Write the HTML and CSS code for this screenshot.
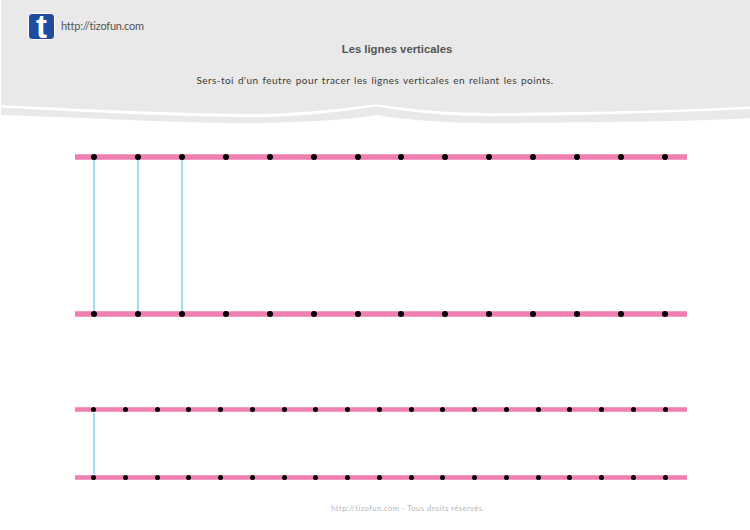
FILE: index.html
```html
<!DOCTYPE html>
<html lang="fr">
<head>
<meta charset="utf-8">
<title>Les lignes verticales</title>
<link rel="stylesheet" href="styles.css">
</head>
<body>
<header class="head">
  <svg class="head-bg" width="750" height="125" viewBox="0 0 750 125" aria-hidden="true">
    <path class="band" d="M1 106V115C100 118 190 124 262 123C310 122 345 120 376 115C410 120 450 124 510 123C600 122 690 122 750 118V106Z"/>
    <path class="gap" d="M0 105V107.500C100 113 190 117 262 117C310 116 345 111 376 106.500C410 112 450 117 510 116C600 115 690 112 750 109V105Z"/>
    <path class="main" d="M1 0V105C100 110 190 114 262 114C310 113 345 108 376 104.500C410 109 450 114 510 113C600 112 690 110 750 106.500V0Z"/>
  </svg>
  <div class="brand">
    <span class="logo"><span class="logo-t">t</span></span>
    <span class="url">http://tizofun.com</span>
  </div>
  <h1 class="title">Les lignes verticales</h1>
  <p class="lead">Sers-toi d'un feutre pour tracer les lignes verticales en reliant les points.</p>
</header>
<main class="sheet">
  <section class="exercise wide">
    <div class="rail"><div class="dot"></div><div class="dot"></div><div class="dot"></div><div class="dot"></div><div class="dot"></div><div class="dot"></div><div class="dot"></div><div class="dot"></div><div class="dot"></div><div class="dot"></div><div class="dot"></div><div class="dot"></div><div class="dot"></div><div class="dot"></div></div>
    <div class="traces"><div class="trace on"></div><div class="trace on"></div><div class="trace on"></div><div class="trace"></div><div class="trace"></div><div class="trace"></div><div class="trace"></div><div class="trace"></div><div class="trace"></div><div class="trace"></div><div class="trace"></div><div class="trace"></div><div class="trace"></div><div class="trace"></div></div>
    <div class="rail"><div class="dot"></div><div class="dot"></div><div class="dot"></div><div class="dot"></div><div class="dot"></div><div class="dot"></div><div class="dot"></div><div class="dot"></div><div class="dot"></div><div class="dot"></div><div class="dot"></div><div class="dot"></div><div class="dot"></div><div class="dot"></div></div>
  </section>
  <section class="exercise narrow">
    <div class="rail"><div class="dot"></div><div class="dot"></div><div class="dot"></div><div class="dot"></div><div class="dot"></div><div class="dot"></div><div class="dot"></div><div class="dot"></div><div class="dot"></div><div class="dot"></div><div class="dot"></div><div class="dot"></div><div class="dot"></div><div class="dot"></div><div class="dot"></div><div class="dot"></div><div class="dot"></div><div class="dot"></div><div class="dot"></div></div>
    <div class="traces"><div class="trace on"></div><div class="trace"></div></div>
    <div class="rail"><div class="dot"></div><div class="dot"></div><div class="dot"></div><div class="dot"></div><div class="dot"></div><div class="dot"></div><div class="dot"></div><div class="dot"></div><div class="dot"></div><div class="dot"></div><div class="dot"></div><div class="dot"></div><div class="dot"></div><div class="dot"></div><div class="dot"></div><div class="dot"></div><div class="dot"></div><div class="dot"></div><div class="dot"></div></div>
  </section>
</main>
<footer class="foot">http://tizofun.com - Tous droits réservés.</footer>
</body>
</html>
```
FILE: styles.css
```css
* { box-sizing: border-box; }
html, body { margin: 0; padding: 0; }
body {
  width: 750px;
  height: 530px;
  overflow: hidden;
  background: #fff;
  font-family: "Lato", "Liberation Sans", sans-serif;
}
.head {
  position: relative;
  height: 125px;
  padding: 12px 0 0 28px;
  display: flex;
  flex-direction: column;
}
.head-bg { position: absolute; left: 0; top: 0; z-index: 0; }
.main { fill: #e9e9e9; }
.gap { fill: #fff; }
.band { fill: #e9e9e9; }
.brand, .title, .lead { position: relative; z-index: 1; }
.brand { display: flex; align-items: center; gap: 6px; height: 28px; }
.logo {
  width: 27px;
  height: 27px;
  background: #1f4c9f;
  border: 1px solid #fff;
  border-radius: 4px;
  display: flex;
  justify-content: center;
}
.logo-t {
  color: #fff;
  font: bold 33px/25px "Liberation Sans", sans-serif;
}
.url { color: #555; font-size: 11px; letter-spacing: -0.23px; padding-bottom: 2px; }
.title {
  margin: 2px 0 0 -28px;
  text-align: center;
  width: 750px;
  padding-left: 44px;
  color: #555;
  font: bold 11.300px/14px "Liberation Sans", sans-serif;
}
.lead {
  margin: 17px 0 0 -28px;
  width: 750px;
  text-align: center;
  color: #3a3a3a;
  font-size: 10px;
  line-height: 14px;
  letter-spacing: 0.45px;
  word-spacing: 1px;
}
.sheet { padding: 29px 63px 0 75px; display: flex; flex-direction: column; gap: 90px; }
.exercise { display: flex; flex-direction: column; }
.rail, .traces {
  padding: 0 19px 0 16px;
  display: flex;
  justify-content: space-between;
}
.rail {
  height: 6px;
  background: #f07fb1;
  box-shadow: inset 0 1px #f59cc4, inset 0 -1px #f59cc4;
  align-items: center;
}
.dot { width: 6px; height: 6px; border-radius: 50%; background: #000; }
.traces { height: 151px; }
.trace { width: 6px; }
.trace.on { background: linear-gradient(#a6daf2, #a6daf2) center / 2px 100% no-repeat; }
.narrow .rail { height: 5px; }
.narrow .dot { width: 5px; height: 5px; }
.narrow .traces { height: 63px; padding-top: 1px; padding-bottom: 1px; justify-content: flex-start; }
.foot {
  margin-top: 24px;
  text-align: center;
  padding-left: 66px;
  color: #b5b5b5;
  font-size: 7.500px;
  line-height: 10px;
  letter-spacing: 0.5px;
}
```
